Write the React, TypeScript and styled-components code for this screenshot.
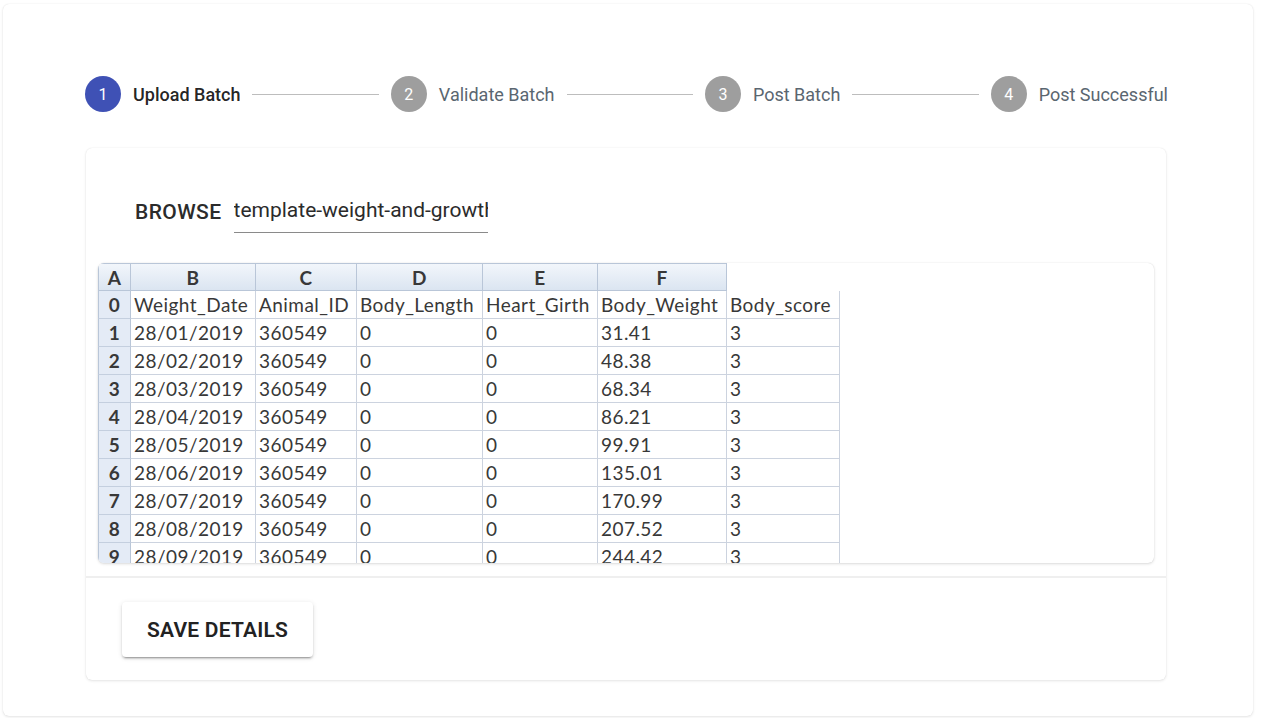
import React from "react";
import styled, { createGlobalStyle } from "styled-components";

const Global = createGlobalStyle`
  html, body { margin: 0; padding: 0; background: #ffffff; }
  body { font-family: Roboto, "Liberation Sans", Arial, sans-serif; }
  * { box-sizing: border-box; }
`;

const Page = styled.div`
  width: 1262px;
  height: 718px;
  padding: 4px 9px 2px 3px;
`;

const OuterCard = styled.div`
  height: 712px;
  background: #fff;
  border-radius: 6px;
  box-shadow: 0 1px 3px rgba(0, 0, 0, 0.1), 0 0 1px rgba(0, 0, 0, 0.12);
  padding: 72px 0 0 82px;
`;

const Container = styled.div`
  width: 1083px;
`;

const Stepper = styled.div`
  display: flex;
  align-items: center;
  height: 36px;
`;

const Step = styled.div`
  display: flex;
  align-items: center;
  gap: 12px;
`;

const Circle = styled.div<{ $active?: boolean }>`
  width: 36px;
  height: 36px;
  border-radius: 50%;
  background: ${(p) => (p.$active ? "#3f51b5" : "#9e9e9e")};
  color: #fff;
  font-size: 16px;
  display: flex;
  align-items: center;
  justify-content: center;
`;

const StepLabel = styled.span<{ $active?: boolean }>`
  font-size: 18px;
  font-weight: ${(p) => (p.$active ? 500 : 400)};
  color: ${(p) => (p.$active ? "rgba(0,0,0,0.87)" : "#5a6670")};
  white-space: nowrap;
`;

const Connector = styled.div`
  flex: 1;
  height: 1px;
  background: #bdbdbd;
  margin: 0 12px;
`;

const InnerCard = styled.div`
  margin: 36px 1px 0 1px;
  width: 1080px;
  height: 532px;
  background: #fff;
  border-radius: 6px;
  box-shadow: 0 1px 3px rgba(0, 0, 0, 0.1), 0 0 1px rgba(0, 0, 0, 0.12);
  display: flex;
  flex-direction: column;
`;

const Content = styled.div`
  padding: 12px 12px 13px 12px;
`;

const BrowseRow = styled.div`
  display: flex;
  align-items: flex-end;
  gap: 12px;
  padding: 38px 0 0 37px;
`;

const BrowseLabel = styled.span`
  font-size: 21px;
  font-weight: 500;
  color: #2b2b2b;
  letter-spacing: 0.02em;
  line-height: 29px;
  margin-bottom: 6px;
`;

const FileInput = styled.input`
  width: 254px;
  height: 35px;
  border: none;
  border-bottom: 1px solid #8a8a8a;
  outline: none;
  padding: 0 0 10px 0;
  font-family: Roboto, sans-serif;
  font-size: 21px;
  color: #2b2b2b;
  background: transparent;
`;

const SheetBox = styled.div`
  margin-top: 30px;
  height: 300px;
  overflow: hidden;
  border-radius: 6px;
  background: #fff;
  box-shadow: 0 1px 3px rgba(0, 0, 0, 0.14), 0 0 1px rgba(0, 0, 0, 0.14);
`;

const Sheet = styled.table`
  border-collapse: separate;
  border-spacing: 0;
  table-layout: fixed;
  width: 742px;
  font-family: Lato, "Open Sans", sans-serif;
  font-size: 19px;
  letter-spacing: 0.45px;
  color: #383838;
`;

const HeadCell = styled.th`
  height: 28px;
  padding: 0;
  font-weight: 700;
  text-align: center;
  background: linear-gradient(#f2f6fb, #dbe5f1);
  border-top: 1px solid #b9c6d8;
  border-right: 1px solid #b9c6d8;
  border-bottom: 1px solid #b9c6d8;
  &:first-child { border-left: 1px solid #b9c6d8; }
`;

const BlankHead = styled.th`
  padding: 0;
  background: transparent;
`;

const RowNum = styled.td`
  height: 28px;
  padding: 0;
  text-align: center;
  font-weight: 700;
  background: #e4ebf6;
  border-left: 1px solid #b9c6d8;
  border-right: 1px solid #b9c6d8;
  border-bottom: 1px solid #c4cfdf;
`;

const Cell = styled.td`
  height: 28px;
  padding: 0 3px;
  white-space: nowrap;
  overflow: hidden;
  border-right: 1px solid #ccd3df;
  border-bottom: 1px solid #ccd3df;
`;

const Divider = styled.div`
  height: 2px;
  background: #efefef;
`;

const Actions = styled.div`
  padding: 24px 0 0 36px;
`;

const SaveButton = styled.button`
  height: 55px;
  padding: 0 25px;
  border: none;
  border-radius: 4px;
  background: #fff;
  font-family: Roboto, sans-serif;
  font-size: 21px;
  font-weight: 600;
  letter-spacing: 0.01em;
  color: #222;
  box-shadow: 0 3px 1px -2px rgba(0, 0, 0, 0.2), 0 2px 2px 0 rgba(0, 0, 0, 0.14),
    0 1px 5px 0 rgba(0, 0, 0, 0.12);
  cursor: pointer;
`;

const steps = ["Upload Batch", "Validate Batch", "Post Batch", "Post Successful"];
const colWidths = [33, 125, 101, 126, 115, 129, 113];
const letters = ["A", "B", "C", "D", "E", "F"];
const headerRow = ["Weight_Date", "Animal_ID", "Body_Length", "Heart_Girth", "Body_Weight", "Body_score"];
const weights = ["31.41", "48.38", "68.34", "86.21", "99.91", "135.01", "170.99", "207.52", "244.42"];

export default function App() {
  const rows: string[][] = [headerRow];
  weights.forEach((w, i) => {
    const m = String(i + 1).padStart(2, "0");
    rows.push([`28/${m}/2019`, "360549", "0", "0", w, "3"]);
  });

  return (
    <Page>
      <Global />
      <OuterCard>
        <Container>
          <Stepper>
            {steps.map((s, i) => (
              <React.Fragment key={s}>
                {i > 0 && <Connector />}
                <Step>
                  <Circle $active={i === 0}>{i + 1}</Circle>
                  <StepLabel $active={i === 0}>{s}</StepLabel>
                </Step>
              </React.Fragment>
            ))}
          </Stepper>
          <InnerCard>
            <Content>
              <BrowseRow>
                <BrowseLabel>BROWSE</BrowseLabel>
                <FileInput readOnly value="template-weight-and-growth.xlsx" />
              </BrowseRow>
              <SheetBox>
                <Sheet>
                  <colgroup>
                    {colWidths.map((w, i) => (
                      <col key={i} style={{ width: w }} />
                    ))}
                  </colgroup>
                  <thead>
                    <tr>
                      {letters.map((l) => (
                        <HeadCell key={l}>{l}</HeadCell>
                      ))}
                      <BlankHead />
                    </tr>
                  </thead>
                  <tbody>
                    {rows.map((r, i) => (
                      <tr key={i}>
                        <RowNum>{i}</RowNum>
                        {r.map((c, j) => (
                          <Cell key={j}>{c}</Cell>
                        ))}
                      </tr>
                    ))}
                  </tbody>
                </Sheet>
              </SheetBox>
            </Content>
            <Divider />
            <Actions>
              <SaveButton>SAVE DETAILS</SaveButton>
            </Actions>
          </InnerCard>
        </Container>
      </OuterCard>
    </Page>
  );
}
